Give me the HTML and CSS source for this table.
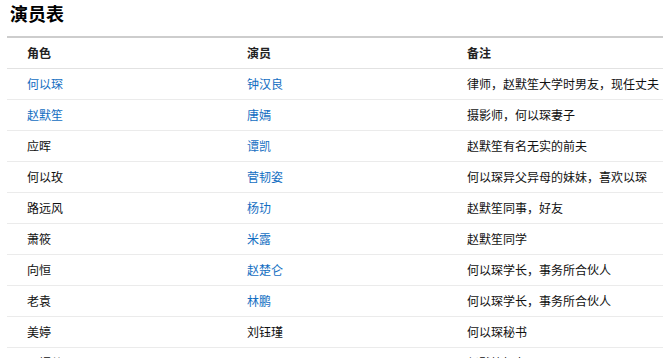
FILE: index.html
```html
<!DOCTYPE html>
<html lang="zh-CN">
<head>
<meta charset="utf-8">
<title>演员表</title>
<link rel="stylesheet" href="styles.css">
</head>
<body>
<div class="page">
  <h2 class="title">演员表</h2>
  <table class="cast">
    <colgroup><col class="c"><col class="c"><col class="c"></colgroup>
    <thead>
      <tr><th>角色</th><th>演员</th><th>备注</th></tr>
    </thead>
    <tbody>
      <tr><td><a>何以琛</a></td><td><a>钟汉良</a></td><td>律师，赵默笙大学时男友，现任丈夫</td></tr>
      <tr><td><a>赵默笙</a></td><td><a>唐嫣</a></td><td>摄影师，何以琛妻子</td></tr>
      <tr><td>应晖</td><td><a>谭凯</a></td><td>赵默笙有名无实的前夫</td></tr>
      <tr><td>何以玫</td><td><a>菅韧姿</a></td><td>何以琛异父异母的妹妹，喜欢以琛</td></tr>
      <tr><td>路远风</td><td><a>杨玏</a></td><td>赵默笙同事，好友</td></tr>
      <tr><td>萧筱</td><td><a>米露</a></td><td>赵默笙同学</td></tr>
      <tr><td>向恒</td><td><a>赵楚仑</a></td><td>何以琛学长，事务所合伙人</td></tr>
      <tr><td>老袁</td><td><a>林鹏</a></td><td>何以琛学长，事务所合伙人</td></tr>
      <tr><td>美婷</td><td>刘钰瑾</td><td>何以琛秘书</td></tr>
      <tr><td>明媚儿</td><td><a>王思思</a></td><td>赵默笙好友</td></tr>
    </tbody>
  </table>
</div>
</body>
</html>
```
FILE: styles.css
```css
html, body {
  margin: 0;
  padding: 0;
  background: #fff;
}
.page {
  overflow: hidden;
  width: 663px;
  height: 358px;
  font-family: "Noto Sans CJK SC", "Noto Sans", sans-serif;
  color: #333;
}
.title {
  margin: 0 0 10px 10px;
  font-size: 18px;
  line-height: 26px;
  font-weight: bold;
  color: #000;
}
.cast {
  margin-left: 7px;
  width: 660px;
  border-collapse: collapse;
  table-layout: fixed;
  border-top: 2px solid #cdcdcd;
  font-size: 12px;
}
.cast .c {
  width: 220px;
}
.cast th,
.cast td {
  height: 30px;
  padding: 0 0 0 20px;
  text-align: left;
  vertical-align: middle;
  line-height: 16px;
  border-bottom: 1px solid #ebebeb;
  white-space: nowrap;
  overflow: hidden;
}
.cast th {
  font-weight: bold;
  color: #222;
  border-bottom-color: #e2e2e2;
}
.cast td {
  color: #111;
}
.cast a {
  color: #136ec2;
  text-decoration: none;
}
```
